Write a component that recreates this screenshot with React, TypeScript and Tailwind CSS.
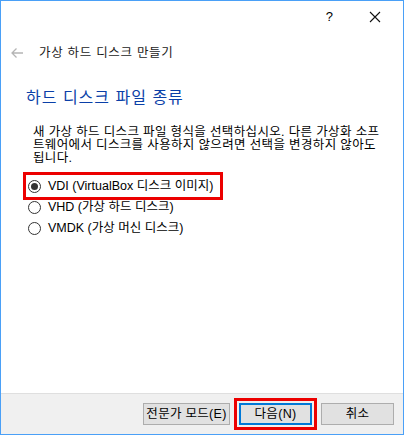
import React from "react";

const font = { fontFamily: '"Liberation Sans", "Noto Sans CJK KR", sans-serif' };

const options = [
  { label: "VDI (VirtualBox 디스크 이미지)", checked: true },
  { label: "VHD (가상 하드 디스크)", checked: false },
  { label: "VMDK (가상 머신 디스크)", checked: false },
];

const Radio = ({ checked }: { checked: boolean }) => (
  <span className="w-[13px] h-[13px] rounded-full border border-[#333] bg-white flex items-center justify-center shrink-0">
    {checked && <span className="w-[7px] h-[7px] rounded-full bg-[#333]" />}
  </span>
);

const Btn = ({ children, primary, w }: { children: React.ReactNode; primary?: boolean; w: string }) => (
  <button
    className={
      "h-[22px] bg-[#e1e1e1] text-[12.5px] tracking-[0.3px] text-black flex items-center justify-center whitespace-nowrap " +
      w +
      (primary ? " border-2 border-[#0078d7]" : " border border-[#adadad]")
    }
  >
    {children}
  </button>
);

export default function App() {
  return (
    <div
      className="w-[404px] h-[435px] border border-[#4aa0f7] bg-white flex flex-col text-black"
      style={font}
    >
      <div className="h-[31px] flex items-center justify-end pr-[20px] gap-[36px] text-[13px]">
        <span className="pt-[1px]">?</span>
        <svg width="12" height="12" viewBox="0 0 12 12" className="mr-[2px]">
          <path d="M1 1 L11 11 M11 1 L1 11" stroke="#111" strokeWidth="1.1" />
        </svg>
      </div>

      <div className="flex items-center h-[42px] pl-[9px]">
        <svg width="14" height="12" viewBox="0 0 14 12">
          <path d="M13 6 H2 M6.5 1.5 L2 6 L6.5 10.5" stroke="#b5b5b5" strokeWidth="1.3" fill="none" />
        </svg>
        <span className="ml-[15px] text-[12.5px] tracking-[0.7px] text-[#1a1a1a]">가상 하드 디스크 만들기</span>
      </div>

      <div className="pl-[25px] mt-[14px] text-[16px] tracking-[1px] text-[#0a3fa8] leading-[20px]">
        하드 디스크 파일 종류
      </div>

      <p className="pl-[32px] pr-[22px] mt-[18px] text-[12.5px] leading-[13px] tracking-[0.35px] break-all">
        새 가상 하드 디스크 파일 형식을 선택하십시오. 다른 가상화 소프트웨어에서 디스크를 사용하지 않으려면 선택을 변경하지 않아도 됩니다.
      </p>

      <div className="mt-[7px] pl-[22px] flex flex-col items-start">
        {options.map((o, i) => (
          <div
            key={i}
            className={
              "flex items-center gap-[7px] text-[12.5px] whitespace-nowrap " +
              (o.checked
                ? "w-[200px] h-[28px] border-[3px] border-[#ec0000] pl-[2px] mb-[-3px]"
                : "h-[21px] pl-[5px]")
            }
          >
            <Radio checked={o.checked} />
            <span>{o.label}</span>
          </div>
        ))}
      </div>

      <div className="flex-1" />

      <div className="h-[41px] bg-[#f0f0f0] border-t border-[#dfdfdf] flex items-center justify-end pr-[9px] gap-[4px]">
        <Btn w="w-[87px]">전문가 모드(E)</Btn>
        <div className="border-[3px] border-[#ec0000] p-[2px]">
          <Btn primary w="w-[73px]">다음(N)</Btn>
        </div>
        <Btn w="w-[73px]">취소</Btn>
      </div>
    </div>
  );
}
